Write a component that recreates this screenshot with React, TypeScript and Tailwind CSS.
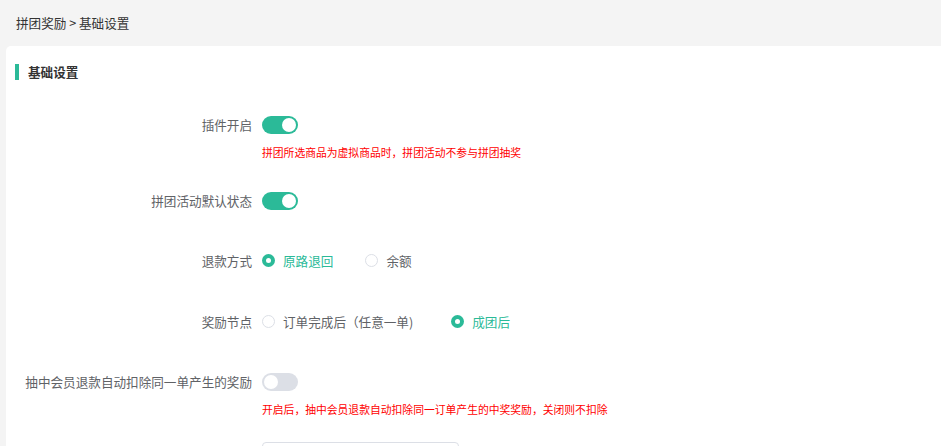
import { useState } from 'react';

const GREEN = 'bg-[#2bba98]';

const Switch = ({ on, onChange }: { on: boolean; onChange: () => void }) => (
  <button
    onClick={onChange}
    className={`relative w-[36px] h-[18px] rounded-full transition-colors ${on ? GREEN : 'bg-[#dcdfe6]'}`}
  >
    <span
      className={`absolute top-[2px] w-[14px] h-[14px] rounded-full bg-white transition-all ${on ? 'left-[20px]' : 'left-[2px]'}`}
    />
  </button>
);

const Radio = ({ checked, label, onClick }: { checked: boolean; label: string; onClick: () => void }) => (
  <label onClick={onClick} className="flex items-center cursor-pointer">
    {checked ? (
      <span className="w-[13px] h-[13px] rounded-full bg-[#2bba98] flex items-center justify-center">
        <span className="w-[5px] h-[5px] rounded-full bg-white" />
      </span>
    ) : (
      <span className="w-[13px] h-[13px] rounded-full border border-[#dcdfe6] bg-white" />
    )}
    <span className={`ml-[8px] ${checked ? 'text-[#2bba98]' : 'text-[#606266]'}`}>{label}</span>
  </label>
);

const FormRow = ({ label, children, hint, className = '' }: { label: string; children: React.ReactNode; hint?: string; className?: string }) => (
  <div className={className}>
    <div className="flex">
      <div className="w-[246px] shrink-0 text-right h-[36px] leading-[36px] text-[#606266]">{label}</div>
      <div className="ml-[10px] h-[36px] flex items-center">{children}</div>
    </div>
    {hint && <div className="ml-[256px] h-[18px] leading-[18px] text-[10.8px] text-[#ff0000]">{hint}</div>}
  </div>
);

export default function App() {
  const [plugin, setPlugin] = useState(true);
  const [defaultOn, setDefaultOn] = useState(true);
  const [refund, setRefund] = useState('original');
  const [node, setNode] = useState('group');
  const [deduct, setDeduct] = useState(false);

  return (
    <div
      className="w-[941px] h-[446px] overflow-hidden bg-[#f4f4f4] text-[12.6px]"
      style={{ fontFamily: '"Microsoft YaHei", "Noto Sans CJK SC", sans-serif' }}
    >
      <div className="h-[46px] flex items-center pl-[16px] text-[#333]">拼团奖励 &gt; 基础设置</div>
      <div className="ml-[6px] bg-white rounded-tl-[5px] h-[400px] pt-[18px]">
        <div className="ml-[9px] border-l-[4px] border-[#2bba98] pl-[9px] h-[16px] leading-[16px] font-bold text-[#333]">
          基础设置
        </div>
        <div className="mt-[27px]">
          <FormRow label="插件开启" hint="拼团所选商品为虚拟商品时，拼团活动不参与拼团抽奖" className="mb-[22px]">
            <Switch on={plugin} onChange={() => setPlugin(!plugin)} />
          </FormRow>
          <FormRow label="拼团活动默认状态" className="mb-[24px]">
            <Switch on={defaultOn} onChange={() => setDefaultOn(!defaultOn)} />
          </FormRow>
          <FormRow label="退款方式" className="mb-[25px]">
            <div className="flex gap-[32px]">
              <Radio checked={refund === 'original'} label="原路退回" onClick={() => setRefund('original')} />
              <Radio checked={refund === 'balance'} label="余额" onClick={() => setRefund('balance')} />
            </div>
          </FormRow>
          <FormRow label="奖励节点" className="mb-[24px]">
            <div className="flex gap-[38px]">
              <Radio checked={node === 'order'} label="订单完成后（任意一单)" onClick={() => setNode('order')} />
              <Radio checked={node === 'group'} label="成团后" onClick={() => setNode('group')} />
            </div>
          </FormRow>
          <FormRow label="抽中会员退款自动扣除同一单产生的奖励" hint="开启后，抽中会员退款自动扣除同一订单产生的中奖奖励，关闭则不扣除" className="mb-[24px]">
            <Switch on={deduct} onChange={() => setDeduct(!deduct)} />
          </FormRow>
          <div className="ml-[256px] w-[197px] h-[32px] border border-[#dcdfe6] rounded-[4px]" />
        </div>
      </div>
    </div>
  );
}
